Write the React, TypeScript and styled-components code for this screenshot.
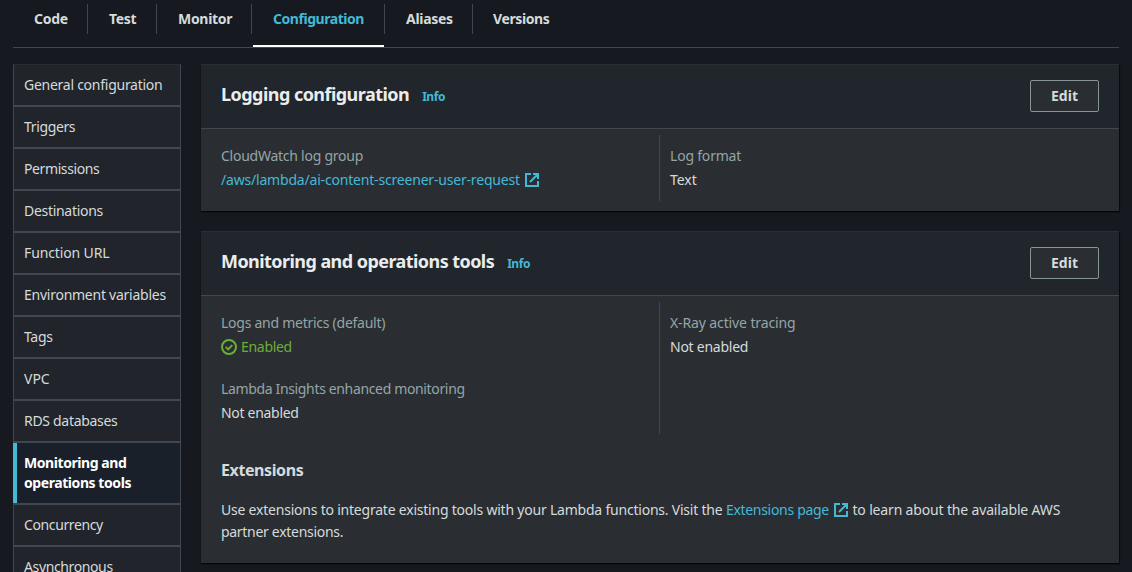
import React from "react";
import styled, { createGlobalStyle } from "styled-components";

const color = {
  page: "#16191f",
  card: "#2a2e33",
  header: "#21252c",
  line: "#414750",
  link: "#44b9d6",
  label: "#95a5a6",
  text: "#d5dbdb",
  heading: "#eaeded",
  green: "#6aaf35",
};

const Global = createGlobalStyle`
  * { box-sizing: border-box; }
  body {
    margin: 0;
    background: ${color.page};
    color: ${color.text};
    font: 14px/22px "Noto Sans", "Open Sans", sans-serif;
    overflow: hidden;
  }
`;

const Page = styled.div`
  height: 572px;
  padding: 0 13px;
  overflow: hidden;
`;

const Spaced = styled.span<{ $ls?: number }>`
  letter-spacing: ${(p) => p.$ls ?? -0.3}px;
  white-space: nowrap;
`;

const Tabs = styled.nav`
  display: flex;
  height: 48px;
  padding-top: 4px;
  border-bottom: 1px solid ${color.line};
`;

const Tab = styled.a<{ $w: number; $active?: boolean }>`
  display: flex;
  flex-direction: column;
  justify-content: space-between;
  width: ${(p) => p.$w}px;
  color: ${(p) => (p.$active ? color.link : color.text)};
  font-weight: 700;
  &::after {
    content: "";
    height: 2px;
    margin: 0 1px;
    background: ${(p) => (p.$active ? "#fff" : "transparent")};
  }
`;

const TabLabel = styled.span<{ $last?: boolean }>`
  height: 30px;
  padding-left: ${(p) => (p.$last ? 20 : 21)}px;
  line-height: 30px;
  border-right: ${(p) => (p.$last ? "0" : `1px solid ${color.line}`)};
`;

const Main = styled.div`
  display: flex;
  align-items: flex-start;
  gap: 20px;
  padding-top: 16px;
`;

const Side = styled.aside`
  width: 168px;
  flex: none;
`;

const SideItem = styled.a<{ $active?: boolean }>`
  display: flex;
  flex-direction: column;
  padding: 10px 0 10px ${(p) => (p.$active ? 7 : 10)}px;
  line-height: 20px;
  border: 1px solid ${color.line};
  border-left: ${(p) => (p.$active ? "0" : `1px solid ${color.line}`)};
  background: ${(p) => (p.$active ? "#1a2029" : "#21252b")};
  box-shadow: ${(p) => (p.$active ? `inset 4px 0 0 ${color.link}` : "none")};
  padding-left: ${(p) => (p.$active ? 11 : 10)}px;
  color: ${(p) => (p.$active ? "#fff" : color.text)};
  font-weight: ${(p) => (p.$active ? 700 : 400)};
  &:first-child { border-top-color: ${color.card}; }
`;

const Cards = styled.main`
  display: flex;
  flex: 1;
  flex-direction: column;
  gap: 20px;
`;

const Card = styled.section<{ $bottom?: number }>`
  padding-bottom: ${(p) => p.$bottom ?? 0}px;
  background: ${color.card};
  box-shadow: 0 1px 1px 0 #05070a, 1px 1px 1px 0 #0b0d11;
`;

const CardHeader = styled.header`
  display: flex;
  align-items: center;
  height: 65px;
  padding: 0 20px 1px;
  background: ${color.header};
  border-top: 1px solid ${color.card};
  border-bottom: 1px solid ${color.line};
`;

const Title = styled.h2`
  margin: 0 13px 4px 0;
  color: ${color.heading};
  font-size: 18px;
  line-height: 22px;
  font-weight: 700;
`;

const Info = styled.a`
  flex: 1;
  margin-top: 1px;
  color: ${color.link};
  font-size: 12px;
  font-weight: 700;
`;

const EditButton = styled.button`
  width: 69px;
  height: 32px;
  padding: 0;
  border: 1px solid #879596;
  border-radius: 2px;
  background: ${color.card};
  color: ${color.text};
  font: inherit;
  font-weight: 700;
`;

const Columns = styled.div`
  display: grid;
  grid-template-columns: 458px 1fr;
  padding-top: 6px;
`;

const Column = styled.div<{ $divided?: boolean }>`
  display: flex;
  flex-direction: column;
  gap: 20px;
  padding: 10px 10px 10px ${(p) => (p.$divided ? 10 : 20)}px;
  border-left: ${(p) => (p.$divided ? `1px solid ${color.line}` : "0")};
`;

const Field = styled.div`
  display: grid;
  gap: 2px;
`;

const Label = styled.div`
  height: 22px;
  color: ${color.label};
`;

const Value = styled.div<{ $color?: string }>`
  display: flex;
  align-items: center;
  height: 22px;
  color: ${(p) => p.$color ?? color.text};
`;

const Extensions = styled.div`
  padding: 25px 20px 20px;
`;

const SubTitle = styled.h3`
  margin: 0 0 18px;
  font-size: 16px;
  line-height: 22px;
  font-weight: 700;
`;

const Line = styled.div`
  display: flex;
  align-items: center;
  height: 22px;
`;

const Link = styled.a`
  display: inline-flex;
  align-items: center;
  color: ${color.link};
`;

const Icon = styled.svg<{ $side: "left" | "right" }>`
  display: block;
  flex: none;
  width: 16px;
  height: 16px;
  margin-${(p) => p.$side}: 4px;
  fill: none;
  stroke: currentColor;
  stroke-width: 2;
`;

const ExternalIcon = () => (
  <Icon viewBox="0 0 16 16" $side="left">
    <path d="M7 2H2v12h12V9M9 2h5v5M6 10l8-8" />
  </Icon>
);

const CheckIcon = () => (
  <Icon viewBox="0 0 16 16" $side="right">
    <circle cx="8" cy="8" r="7" />
    <path d="M4.7 8l2.5 2.4 4.1-4.3" />
  </Icon>
);

const tabs = [
  { name: "Code", w: 75 },
  { name: "Test", w: 69 },
  { name: "Monitor", w: 95 },
  { name: "Configuration", w: 133, ls: -0.45, active: true },
  { name: "Aliases", w: 88 },
  { name: "Versions", w: 100, ls: -0.38 },
];

const sideItems: { lines: string[]; ls?: number; active?: boolean }[] = [
  { lines: ["General configuration"], ls: -0.26 },
  { lines: ["Triggers"], ls: -0.36 },
  { lines: ["Permissions"], ls: -0.4 },
  { lines: ["Destinations"] },
  { lines: ["Function URL"], ls: -0.13 },
  { lines: ["Environment variables"], ls: -0.25 },
  { lines: ["Tags"] },
  { lines: ["VPC"], ls: 0 },
  { lines: ["RDS databases"] },
  { lines: ["Monitoring and", "operations tools"], ls: -0.43, active: true },
  { lines: ["Concurrency"], ls: -0.39 },
  { lines: ["Asynchronous"], ls: -0.38 },
];

export default function App() {
  return (
    <Page>
      <Global />
      <Tabs>
        {tabs.map((t, i) => (
          <Tab key={t.name} $w={t.w} $active={t.active}>
            <TabLabel $last={i === tabs.length - 1}>
              <Spaced $ls={t.ls}>{t.name}</Spaced>
            </TabLabel>
          </Tab>
        ))}
      </Tabs>
      <Main>
        <Side>
          {sideItems.map((s) => (
            <SideItem key={s.lines[0]} $active={s.active}>
              {s.lines.map((l) => (
                <Spaced key={l} $ls={s.ls}>{l}</Spaced>
              ))}
            </SideItem>
          ))}
        </Side>
        <Cards>
          <Card $bottom={10}>
            <CardHeader>
              <Title><Spaced $ls={-0.54}>Logging configuration</Spaced></Title>
              <Info><Spaced $ls={-0.45}>Info</Spaced></Info>
              <EditButton>Edit</EditButton>
            </CardHeader>
            <Columns>
              <Column>
                <Field>
                  <Label><Spaced $ls={-0.25}>CloudWatch log group</Spaced></Label>
                  <Value $color={color.link}>
                    <Spaced $ls={-0.19}>/aws/lambda/ai-content-screener-user-request</Spaced>
                    <ExternalIcon />
                  </Value>
                </Field>
              </Column>
              <Column $divided>
                <Field>
                  <Label><Spaced $ls={-0.2}>Log format</Spaced></Label>
                  <Value><Spaced $ls={-0.05}>Text</Spaced></Value>
                </Field>
              </Column>
            </Columns>
          </Card>
          <Card>
            <CardHeader>
              <Title><Spaced $ls={-0.56}>Monitoring and operations tools</Spaced></Title>
              <Info><Spaced $ls={-0.45}>Info</Spaced></Info>
              <EditButton>Edit</EditButton>
            </CardHeader>
            <Columns>
              <Column>
                <Field>
                  <Label><Spaced $ls={-0.26}>Logs and metrics (default)</Spaced></Label>
                  <Value $color={color.green}>
                    <CheckIcon />
                    <Spaced>Enabled</Spaced>
                  </Value>
                </Field>
                <Field>
                  <Label><Spaced $ls={-0.35}>Lambda Insights enhanced monitoring</Spaced></Label>
                  <Value><Spaced>Not enabled</Spaced></Value>
                </Field>
              </Column>
              <Column $divided>
                <Field>
                  <Label><Spaced $ls={-0.12}>X-Ray active tracing</Spaced></Label>
                  <Value><Spaced $ls={-0.25}>Not enabled</Spaced></Value>
                </Field>
              </Column>
            </Columns>
            <Extensions>
              <SubTitle><Spaced $ls={-0.4}>Extensions</Spaced></SubTitle>
              <Line>
                <Spaced $ls={-0.215}>Use extensions to integrate existing tools with your Lambda functions. Visit the&nbsp;</Spaced>
                <Link><Spaced>Extensions page</Spaced><ExternalIcon /></Link>
                <Spaced $ls={-0.16}>&nbsp;to learn about the available AWS</Spaced>
              </Line>
              <Line><Spaced>partner extensions.</Spaced></Line>
            </Extensions>
          </Card>
        </Cards>
      </Main>
    </Page>
  );
}
